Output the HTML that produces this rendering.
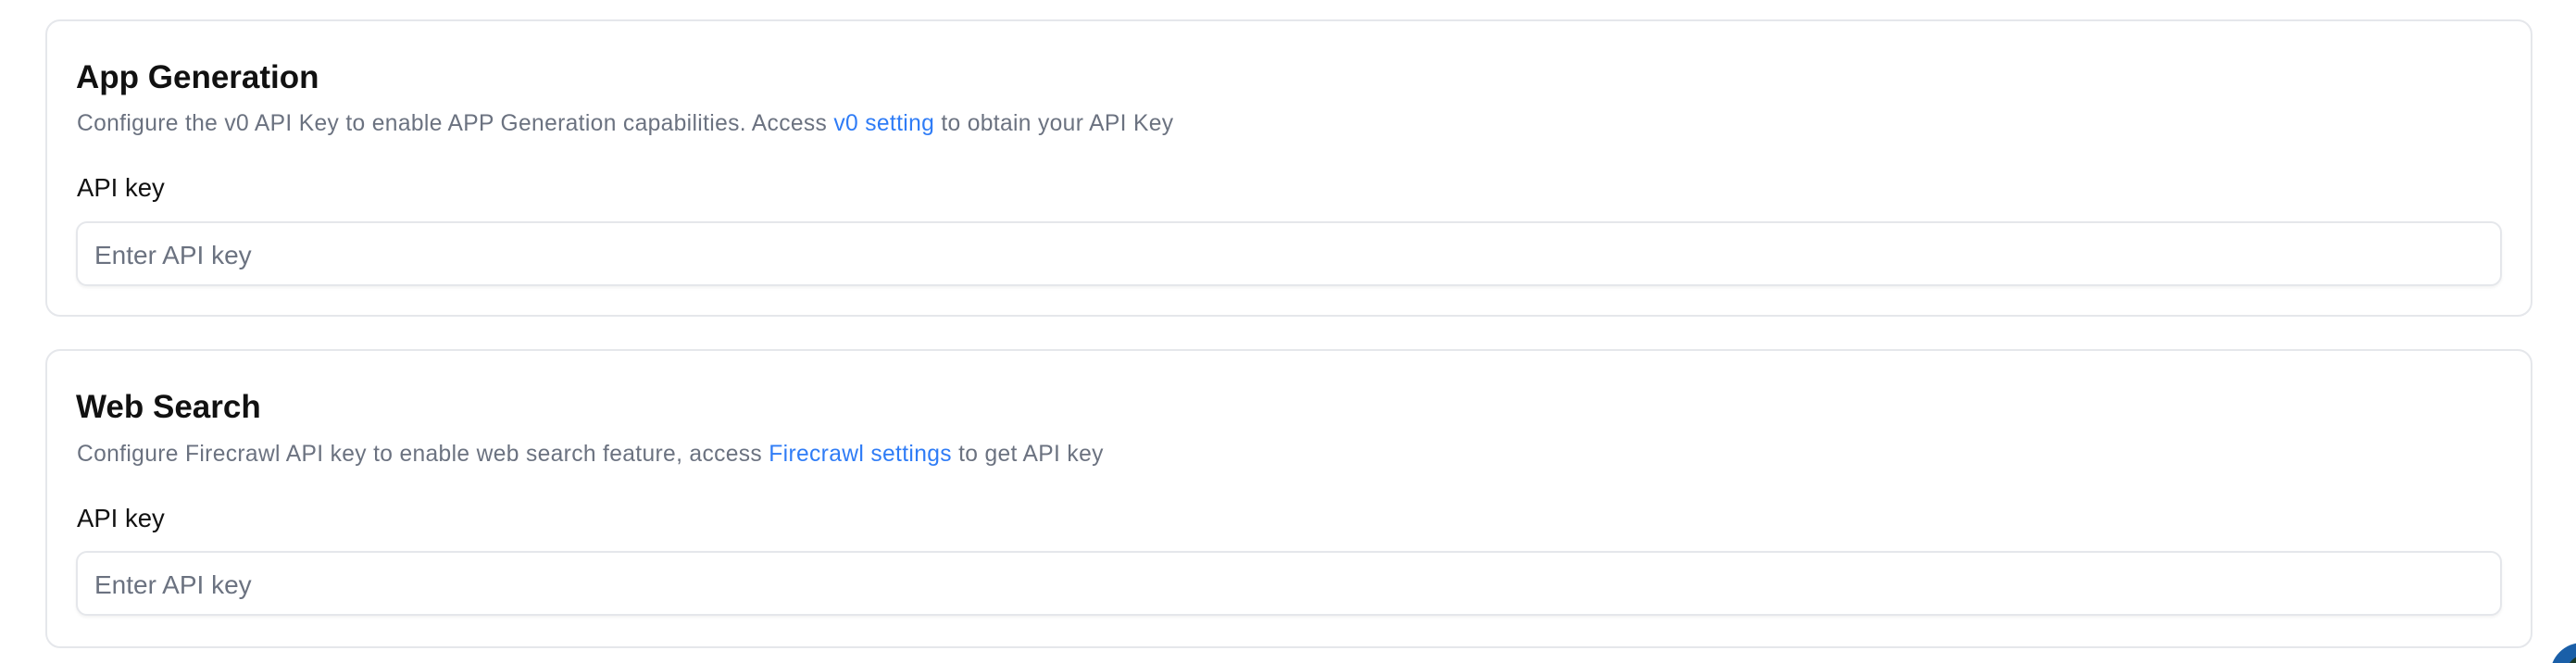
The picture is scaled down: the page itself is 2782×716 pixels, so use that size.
<!DOCTYPE html>
<html><head><meta charset="utf-8"><style>
html,body{margin:0;padding:0;width:2782px;height:716px;background:#fff;overflow:hidden;font-family:"Liberation Sans",Arial,sans-serif;position:relative}
.card{position:absolute;left:49px;width:2686px;height:321px;border:2px solid #e5e7eb;border-radius:16px;box-sizing:border-box;background:#fff}
.t{position:absolute;left:82px;font-size:35px;font-weight:700;color:#111;margin:0;line-height:1}
.d{position:absolute;left:83px;font-size:24.6px;color:#6b7280;line-height:1;letter-spacing:0.35px}
.d a{color:#2f7cf6;text-decoration:none}
.l{position:absolute;left:83px;font-size:27.5px;font-weight:500;color:#111;line-height:1}
.in{position:absolute;left:82px;width:2620px;height:70px;border:2px solid #e5e7eb;border-radius:12px;box-sizing:border-box;box-shadow:0 2px 3px rgba(0,0,0,0.05);background:#fff}
.in span{position:absolute;left:18px;top:21px;font-size:28px;color:#6b7280;line-height:1}
.cw{position:absolute;left:2740px;top:680px;width:42px;height:36px;overflow:hidden}
.corner{position:absolute;left:14px;top:14px;width:70px;height:70px;border-radius:50%;background:#1a5fa8}
.corner2{position:absolute;left:30px;top:26px;width:50px;height:50px;border-radius:50%;background:#1d3a2a}
</style></head><body>
<div class="card" style="top:21px"></div>
<div class="t" style="top:66px">App Generation</div>
<div class="d" style="top:122px">Configure the v0 API Key to enable APP Generation capabilities. Access <a>v0 setting</a> to obtain your API Key</div>
<div class="l" style="top:189px">API key</div>
<div class="in" style="top:239px"><span>Enter API key</span></div>

<div class="card" style="top:377px;height:323px"></div>
<div class="t" style="top:422px">Web Search</div>
<div class="d" style="top:479px">Configure Firecrawl API key to enable web search feature, access <a>Firecrawl settings</a> to get API key</div>
<div class="l" style="top:546px">API key</div>
<div class="in" style="top:595px"><span>Enter API key</span></div>
<div class="cw"><div class="corner"></div><div class="corner2"></div></div>
</body></html>
